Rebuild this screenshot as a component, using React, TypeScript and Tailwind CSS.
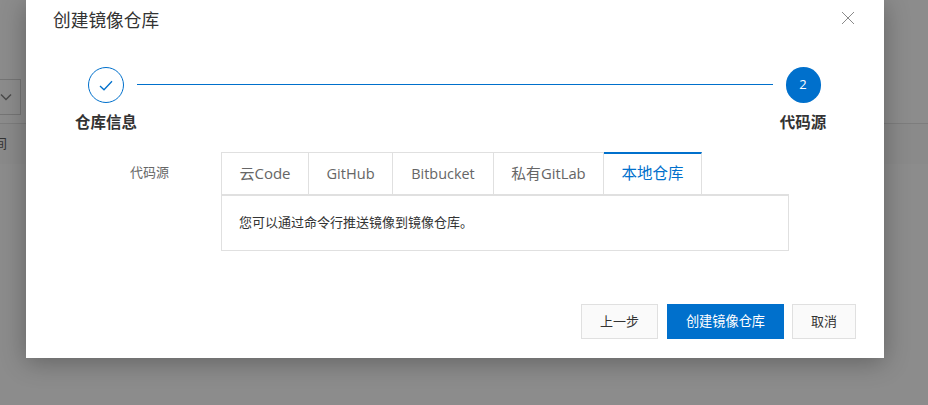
import React from 'react';

const FONT = '"Open Sans", "Noto Sans CJK SC", sans-serif';

const tabs = [
  { label: '云Code', width: 'w-[88px]', size: 'text-[15px]' },
  { label: 'GitHub', width: 'w-[84px]', size: 'text-[14.6px]' },
  { label: 'Bitbucket', width: 'w-[101px]', size: 'text-[14.4px]' },
  { label: '私有GitLab', width: 'w-[110px]', size: 'text-[14.8px]' },
];

// Stepper: two nodes joined by a line
const Stepper: React.FC = () => (
  <div className="flex justify-between pl-[50px] pr-[58px] pt-[67px]">
    <div className="flex flex-col items-center w-[60px] shrink-0">
      <div className="w-9 h-9 rounded-full border border-[#0070cc] flex items-center justify-center">
        <svg width="16" height="16" viewBox="0 0 16 16" fill="none" stroke="#0070cc" strokeWidth="1.3" className="mt-[1px]">
          <path d="M2 8l4 3.8L14 3.2" />
        </svg>
      </div>
      <div className="mt-[9px] text-[15.5px] leading-[20px] font-bold text-[#333] whitespace-nowrap">仓库信息</div>
    </div>
    <div className="flex-1 h-px bg-[#0070cc] mt-[17px] ml-[1px] mr-[-16px]" />
    <div className="flex flex-col items-center w-[46px] shrink-0 ml-[23px]">
      <div className="w-[35px] h-9 rounded-full bg-[#0070cc] text-white text-[13px] flex items-center justify-center">2</div>
      <div className="mt-[9px] text-[15.5px] leading-[20px] font-bold text-[#333] whitespace-nowrap">代码源</div>
    </div>
  </div>
);

const App: React.FC = () => {
  return (
    <div className="relative w-[928px] h-[405px] overflow-hidden bg-[#8c8c8c]" style={{ fontFamily: FONT }}>
      {/* page behind the overlay */}
      <div className="pt-[79px]">
        <div className="w-[21px] h-9 border border-[#757575] border-l-0 flex items-center justify-end pr-[8px]">
          <svg width="12" height="12" viewBox="0 0 12 12" fill="none" stroke="#4a4a4a" strokeWidth="1.5">
            <path d="M1 3.5l5 5 5-5" />
          </svg>
        </div>
        <div className="mt-2 h-px bg-[#7d7d7d]" />
        <div className="h-[40px] bg-[#8a8a8a] relative overflow-hidden">
          <span className="absolute left-[-19px] top-[10px] text-[13px] text-[#333]">时间</span>
        </div>
      </div>

      {/* dialog */}
      <div className="absolute left-[26px] top-0 w-[858px] h-[358px] bg-white shadow-[0_4px_24px_rgba(0,0,0,0.3)]">
        <div className="absolute left-[27px] top-[8px] text-[17.7px] leading-[25px] text-[#333]">创建镜像仓库</div>
        <button className="absolute right-[29px] top-[11px] w-[14px] h-[14px]" aria-label="close">
          <svg width="14" height="14" viewBox="0 0 14 14" fill="none" stroke="#8a8a8a" strokeWidth="1">
            <path d="M1 1l12 12M13 1L1 13" />
          </svg>
        </button>

        <Stepper />

        <div className="flex mt-[20px]">
          <div className="w-[144px] pl-[104px] pt-[11px] text-[13px] leading-[18px] text-[#666] whitespace-nowrap shrink-0">代码源</div>
          <div className="ml-[51px] w-[568px]">
            <div className="flex h-[44px] border-b-2 border-[#e0e0e0]">
              {tabs.map((tab, i) => (
                <div
                  key={tab.label}
                  className={`${tab.width} ${tab.size} ${i === 0 ? 'border-l' : ''} h-[42px] border-t border-r border-[#e0e0e0] flex items-center justify-center text-[#666] bg-white`}
                >
                  {tab.label}
                </div>
              ))}
              <div className="w-[98px] h-[42px] border-t-2 border-t-[#0070cc] border-r border-[#e0e0e0] flex items-center justify-center text-[15.5px] text-[#0070cc] bg-white">
                本地仓库
              </div>
            </div>
            <div className="h-[55px] border border-t-0 border-[#e0e0e0] pl-[17px] pt-[17px] text-[13px] leading-[18px] text-[#333]">
              您可以通过命令行推送镜像到镜像仓库。
            </div>
          </div>
        </div>

        <div className="flex justify-end gap-[8px] pr-[28px] mt-[53px]">
          <button className="w-[77px] h-[35px] border border-[#e0e0e0] bg-[#fafafa] text-[13px] text-[#333]">上一步</button>
          <button className="w-[117px] h-[35px] ml-px bg-[#0070cc] text-[13.2px] text-white">创建镜像仓库</button>
          <button className="w-[64px] h-[35px] border border-[#e0e0e0] bg-[#fafafa] text-[13px] text-[#333]">取消</button>
        </div>
      </div>
    </div>
  );
};

export default App;
